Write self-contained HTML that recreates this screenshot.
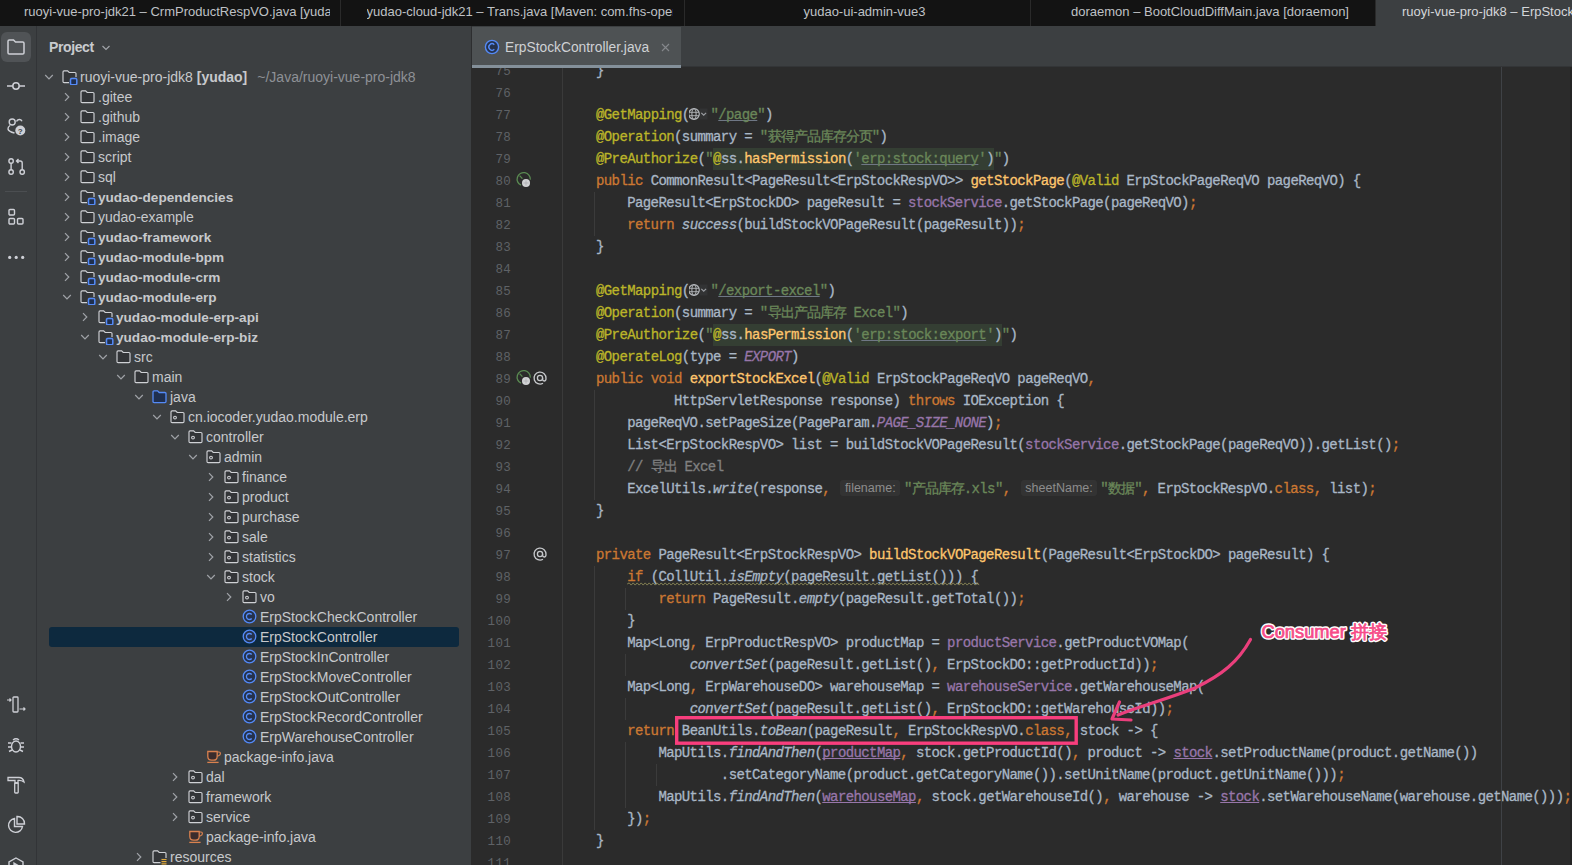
<!DOCTYPE html>
<html><head><meta charset="utf-8"><style>
*{margin:0;padding:0;box-sizing:border-box}
html,body{width:1572px;height:865px;overflow:hidden;background:#2b2b2b}
body{position:relative;font-family:"Liberation Sans",sans-serif}
#title{position:absolute;left:0;top:0;width:1572px;height:26px;background:#131313;overflow:hidden}
.tt{position:absolute;top:0;height:26px;border-right:1px solid #2a2a2a;color:#bfc1c5;font-size:13px;line-height:23px;text-align:center;white-space:nowrap;overflow:hidden}
.tt{padding-left:14px}.tt span{display:inline-block;max-width:306px;overflow:hidden;vertical-align:top}
.tt.act{background:#3c3f41;color:#d4d6da;text-align:left;padding-left:26px;border:none}
.tt.act span{max-width:none}
#act{position:absolute;left:0;top:26px;width:37px;height:839px;background:#3c3f41;border-right:1px solid #323437}
.actsel{position:absolute;left:1px;top:6px;width:30px;height:30px;border-radius:6px;background:#505356}
.ai{position:absolute}
.actsep{position:absolute;left:5px;top:165px;width:22px;height:1px;background:#4b4e51}
#panel{position:absolute;left:37px;top:26px;width:434px;height:839px;background:#3c3f41;overflow:hidden}
#tree{position:absolute;left:-37px;top:-26px;width:471px;height:865px}
.ph{position:absolute;left:12px;top:13px;font-size:14px;letter-spacing:-0.4px;font-weight:bold;color:#c9cbcf}
.ph svg{position:absolute;left:52px;top:4px}
.chw{position:absolute;width:10px;height:10px}
.chev{display:block}
.ic{position:absolute}
.tl{position:absolute;height:20px;line-height:20px;font-size:14px;color:#c7c9cc;white-space:nowrap}
.tl.b{font-weight:bold;font-size:13.6px;line-height:21.8px}
.tl b{font-weight:bold}
.gr{color:#8e9196;font-weight:normal;margin-left:10px}
.sel{position:absolute;left:49px;width:410px;height:20px;background:#0d293e;border-radius:3px}
#ehead{position:absolute;left:471px;top:26px;width:1101px;height:41px;background:#3c3f41;border-bottom:1px solid #333537;border-left:1px solid #2d2e30}
.etab{position:absolute;left:0px;top:1px;width:209px;height:41px;background:#4e5254}
.etab .ul{position:absolute;left:0;bottom:0;width:209px;height:3px;background:#84909a}
.etab .t{position:absolute;left:33px;top:13px;font-size:13.8px;color:#cfd1d4;white-space:nowrap}
.etab svg{position:absolute}
#editor{position:absolute;left:471px;top:67px;width:1101px;height:798px;background:#2b2b2b;overflow:hidden}
#code{position:absolute;left:-471px;top:-67px;width:1572px;height:865px}
.ln{position:absolute;left:480px;width:31px;height:22px;line-height:24px;text-align:right;font-family:"Liberation Mono",monospace;font-size:12.5px;letter-spacing:0.3px;color:#5f6266}
.cl{position:absolute;left:564.8px;height:22px;line-height:23px;font-family:"Liberation Mono",monospace;font-size:14px;letter-spacing:-0.6px;-webkit-text-stroke:0.3px currentColor;color:#a9b7c6;white-space:pre}
.gsep{position:absolute;left:562px;top:67px;width:1px;height:798px;background:#3a3a3a}
.guide{position:absolute;width:1px;background:#3b3b3b}
.rmargin{position:absolute;left:1500.5px;top:67px;width:1px;height:798px;background:#3f4246;z-index:2}
.redge{position:absolute;left:1570px;top:67px;width:2px;height:798px;background:#242424;z-index:2}
.k{color:#cc7832}.a{color:#bbb529}.s{color:#6a8759}.m{color:#ffc66d}.f{color:#9876aa}
.fi{color:#9876aa;font-style:italic}.i{font-style:italic}.c{color:#808080}
.su{color:#6a8759;text-decoration:underline;text-decoration-color:#6f7785;text-decoration-skip-ink:none}
.fu{color:#9876aa;text-decoration:underline;text-decoration-skip-ink:none}
.cjk,.cjkc{}
.cjk{color:#6a8759}.cjkc{color:#808080}
.cj{display:inline-block;width:13px;font-weight:normal;text-align:center}
.globe{display:inline-block;width:20.8px;vertical-align:top;position:relative}
.globe svg{position:absolute;left:-0.8px;top:2.2px}
.spel{background:#343e33;display:inline-block;height:22px;vertical-align:top}
.hint{display:inline-block;position:relative;vertical-align:top;height:22px}
.hint span{position:absolute;left:2.5px;right:3.5px;top:2.5px;height:16px;line-height:16px;background:#333333;border-radius:3px;color:#8d8d8d;font-family:"Liberation Sans",sans-serif;font-size:12.5px;padding-left:4.5px;letter-spacing:0;-webkit-text-stroke:0}
.wavy{}
.WAVY{text-decoration:underline wavy #8a8a5a}
#anno{position:absolute;left:0;top:0}
.atext{position:absolute;left:1261px;top:618px;font-size:18px;font-weight:bold;color:#ee4a86;white-space:nowrap;letter-spacing:-0.5px;
 text-shadow:1px 1px 0 #fff,-1px -1px 0 #fff,1px -1px 0 #fff,-1px 1px 0 #fff,0 1px 0 #fff,0 -1px 0 #fff,1px 0 0 #fff,-1px 0 0 #fff}
</style></head>
<body>
<div id="title"><div class="tt" style="left:0px;width:341px"><span>ruoyi-vue-pro-jdk21 – CrmProductRespVO.java [yudao]</span></div><div class="tt" style="left:341px;width:344px"><span>yudao-cloud-jdk21 – Trans.java [Maven: com.fhs-open</span></div><div class="tt" style="left:685px;width:346px"><span>yudao-ui-admin-vue3</span></div><div class="tt" style="left:1031px;width:345px"><span>doraemon – BootCloudDiffMain.java [doraemon]</span></div><div class="tt act" style="left:1376px;width:344px"><span>ruoyi-vue-pro-jdk8 – ErpStockController.java [yudao]</span></div></div>
<div id="act">
<div class="actsel"></div>
<svg class="ai" style="left:6px;top:11px" width="20" height="20" viewBox="0 0 20 20"><path d="M2 4.3 Q2 3 3.3 3 H7.5 L9.5 5 H16.7 Q18 5 18 6.3 V15.7 Q18 17 16.7 17 H3.3 Q2 17 2 15.7 Z" fill="none" stroke="#ced0d6" stroke-width="1.5"/></svg>
<svg class="ai" style="left:6px;top:50px" width="20" height="20" viewBox="0 0 20 20"><circle cx="10" cy="10" r="3.2" fill="none" stroke="#ced0d6" stroke-width="1.5"/><path d="M1 10 H6.8 M13.2 10 H19" stroke="#ced0d6" stroke-width="1.5"/></svg>
<svg class="ai" style="left:6px;top:90px" width="20" height="20" viewBox="0 0 20 20"><circle cx="6.2" cy="6" r="3" fill="none" stroke="#ced0d6" stroke-width="1.4"/><path d="M10.5 5.5 A3 3 0 0 1 16 5.2" fill="none" stroke="#ced0d6" stroke-width="1.4"/><path d="M4 9.5 Q1.8 11 2 13 Q2.5 15.5 8.5 17" fill="none" stroke="#ced0d6" stroke-width="1.4"/><circle cx="14.3" cy="14.5" r="5" fill="#ced0d6"/><text x="14.3" y="17.6" font-size="8" font-family="Liberation Sans" font-weight="bold" text-anchor="middle" fill="#3c3f41">?</text></svg>
<svg class="ai" style="left:6px;top:130px" width="20" height="20" viewBox="0 0 20 20"><circle cx="5.1" cy="5" r="2.2" fill="none" stroke="#ced0d6" stroke-width="1.4"/><circle cx="5.1" cy="16" r="2.2" fill="none" stroke="#ced0d6" stroke-width="1.4"/><circle cx="16.2" cy="16" r="2.2" fill="none" stroke="#ced0d6" stroke-width="1.4"/><path d="M5.1 7.2 V13.8 M16.2 13.8 V7 Q16.2 5 14.2 5 H10.5 M12.5 3 L10.5 5 L12.5 7" fill="none" stroke="#ced0d6" stroke-width="1.4"/></svg>
<div class="actsep"></div>
<svg class="ai" style="left:6px;top:181px" width="20" height="20" viewBox="0 0 20 20"><rect x="3" y="2.5" width="5.5" height="5.5" rx="1" fill="none" stroke="#ced0d6" stroke-width="1.4"/><rect x="3" y="11.5" width="5.5" height="5.5" rx="1" fill="none" stroke="#ced0d6" stroke-width="1.4"/><rect x="11.5" y="11.5" width="5.5" height="5.5" rx="1" fill="none" stroke="#ced0d6" stroke-width="1.4"/></svg>
<svg class="ai" style="left:6px;top:221px" width="20" height="20" viewBox="0 0 20 20"><circle cx="3.7" cy="10.4" r="1.6" fill="#ced0d6"/><circle cx="10.2" cy="10.4" r="1.6" fill="#ced0d6"/><circle cx="16.7" cy="10.4" r="1.6" fill="#ced0d6"/></svg>
<svg class="ai" style="left:6px;top:669px" width="20" height="20" viewBox="0 0 20 20"><rect x="7" y="2" width="5" height="15" rx="0.8" fill="none" stroke="#ced0d6" stroke-width="1.3"/><path d="M1 5 H5 M3.5 3.5 L5 5 L3.5 6.5 M13.5 14 H19 M17.5 12.5 L19 14 L17.5 15.5" fill="none" stroke="#ced0d6" stroke-width="1.2"/></svg>
<svg class="ai" style="left:6px;top:709px" width="20" height="20" viewBox="0 0 20 20"><ellipse cx="10" cy="11.5" rx="4.5" ry="5.5" fill="none" stroke="#ced0d6" stroke-width="1.4"/><path d="M7 5 Q10 2.5 13 5 M2 8 H5.5 M14.5 8 H18 M2 12 H5.5 M14.5 12 H18 M3 16.5 L6 15 M17 16.5 L14 15" fill="none" stroke="#ced0d6" stroke-width="1.4"/></svg>
<svg class="ai" style="left:6px;top:749px" width="20" height="20" viewBox="0 0 20 20"><path d="M2 2.5 H13 Q17 2.5 18 7 Q15 5 12 5.5 V8 H9 V5.5 H2 Z" fill="none" stroke="#ced0d6" stroke-width="1.3"/><rect x="8.7" y="8" width="3.5" height="10" rx="0.8" fill="none" stroke="#ced0d6" stroke-width="1.3"/></svg>
<svg class="ai" style="left:6px;top:789px" width="20" height="20" viewBox="0 0 20 20"><path d="M8.5 3.5 A7 7 0 1 0 16.5 11.5 H8.5 Z" fill="none" stroke="#ced0d6" stroke-width="1.4"/><path d="M11 1.5 A7 7 0 0 1 18.5 9 H11 Z" fill="none" stroke="#ced0d6" stroke-width="1.4"/></svg>
<svg class="ai" style="left:6px;top:830px" width="20" height="20" viewBox="0 0 20 20"><path d="M10 2 L17 6 V14 L10 18 L3 14 V6 Z" fill="none" stroke="#ced0d6" stroke-width="1.4"/><path d="M8 7 L13 10 L8 13 Z" fill="none" stroke="#ced0d6" stroke-width="1.3"/></svg>
</div>
<div id="panel"><div class="ph">Project<svg width="10" height="10" viewBox="0 0 10 10"><path d="M1.5 3 L5 6.5 L8.5 3" fill="none" stroke="#a0a3a8" stroke-width="1.2"/></svg></div><div id="tree"><div class="chw" style="left:44px;top:71.9px"><svg class="chev" width="10" height="10" viewBox="0 0 10 10"><path d="M1.2 3 L5 6.8 L8.8 3" fill="none" stroke="#a0a3a8" stroke-width="1.2"/></svg></div><svg class="ic" style="left:62px;top:69.4px" width="16" height="16" viewBox="0 0 16 16"><path d="M1 3 Q1 1.9 2.1 1.9 H5.6 L7.2 3.5 H12.9 Q14 3.5 14 4.6 V12.5 Q14 13.6 12.9 13.6 H2.1 Q1 13.6 1 12.5 Z" fill="#333538" stroke="#cfd1d5" stroke-width="1.15"/><rect x="8.5" y="9.5" width="6.3" height="6.3" rx="1.2" fill="none" stroke="#3c3f41" stroke-width="3"/><rect x="8.5" y="9.5" width="6.3" height="6.3" rx="1.2" fill="#1f2f4f" stroke="#548af7" stroke-width="1.5"/></svg><div class="tl" style="left:80px;top:66.9px">ruoyi-vue-pro-jdk8 <b>[yudao]</b><span class="gr">~/Java/ruoyi-vue-pro-jdk8</span></div><div class="chw" style="left:62px;top:91.9px"><svg class="chev" width="10" height="10" viewBox="0 0 10 10"><path d="M3 1.2 L6.8 5 L3 8.8" fill="none" stroke="#a0a3a8" stroke-width="1.2"/></svg></div><svg class="ic" style="left:80px;top:89.4px" width="16" height="16" viewBox="0 0 16 16"><path d="M1 3 Q1 1.9 2.1 1.9 H5.6 L7.2 3.5 H12.9 Q14 3.5 14 4.6 V12.5 Q14 13.6 12.9 13.6 H2.1 Q1 13.6 1 12.5 Z" fill="#333538" stroke="#cfd1d5" stroke-width="1.15"/></svg><div class="tl" style="left:98px;top:86.9px">.gitee</div><div class="chw" style="left:62px;top:111.9px"><svg class="chev" width="10" height="10" viewBox="0 0 10 10"><path d="M3 1.2 L6.8 5 L3 8.8" fill="none" stroke="#a0a3a8" stroke-width="1.2"/></svg></div><svg class="ic" style="left:80px;top:109.4px" width="16" height="16" viewBox="0 0 16 16"><path d="M1 3 Q1 1.9 2.1 1.9 H5.6 L7.2 3.5 H12.9 Q14 3.5 14 4.6 V12.5 Q14 13.6 12.9 13.6 H2.1 Q1 13.6 1 12.5 Z" fill="#333538" stroke="#cfd1d5" stroke-width="1.15"/></svg><div class="tl" style="left:98px;top:106.9px">.github</div><div class="chw" style="left:62px;top:131.9px"><svg class="chev" width="10" height="10" viewBox="0 0 10 10"><path d="M3 1.2 L6.8 5 L3 8.8" fill="none" stroke="#a0a3a8" stroke-width="1.2"/></svg></div><svg class="ic" style="left:80px;top:129.4px" width="16" height="16" viewBox="0 0 16 16"><path d="M1 3 Q1 1.9 2.1 1.9 H5.6 L7.2 3.5 H12.9 Q14 3.5 14 4.6 V12.5 Q14 13.6 12.9 13.6 H2.1 Q1 13.6 1 12.5 Z" fill="#333538" stroke="#cfd1d5" stroke-width="1.15"/></svg><div class="tl" style="left:98px;top:126.9px">.image</div><div class="chw" style="left:62px;top:151.9px"><svg class="chev" width="10" height="10" viewBox="0 0 10 10"><path d="M3 1.2 L6.8 5 L3 8.8" fill="none" stroke="#a0a3a8" stroke-width="1.2"/></svg></div><svg class="ic" style="left:80px;top:149.4px" width="16" height="16" viewBox="0 0 16 16"><path d="M1 3 Q1 1.9 2.1 1.9 H5.6 L7.2 3.5 H12.9 Q14 3.5 14 4.6 V12.5 Q14 13.6 12.9 13.6 H2.1 Q1 13.6 1 12.5 Z" fill="#333538" stroke="#cfd1d5" stroke-width="1.15"/></svg><div class="tl" style="left:98px;top:146.9px">script</div><div class="chw" style="left:62px;top:171.9px"><svg class="chev" width="10" height="10" viewBox="0 0 10 10"><path d="M3 1.2 L6.8 5 L3 8.8" fill="none" stroke="#a0a3a8" stroke-width="1.2"/></svg></div><svg class="ic" style="left:80px;top:169.4px" width="16" height="16" viewBox="0 0 16 16"><path d="M1 3 Q1 1.9 2.1 1.9 H5.6 L7.2 3.5 H12.9 Q14 3.5 14 4.6 V12.5 Q14 13.6 12.9 13.6 H2.1 Q1 13.6 1 12.5 Z" fill="#333538" stroke="#cfd1d5" stroke-width="1.15"/></svg><div class="tl" style="left:98px;top:166.9px">sql</div><div class="chw" style="left:62px;top:191.9px"><svg class="chev" width="10" height="10" viewBox="0 0 10 10"><path d="M3 1.2 L6.8 5 L3 8.8" fill="none" stroke="#a0a3a8" stroke-width="1.2"/></svg></div><svg class="ic" style="left:80px;top:189.4px" width="16" height="16" viewBox="0 0 16 16"><path d="M1 3 Q1 1.9 2.1 1.9 H5.6 L7.2 3.5 H12.9 Q14 3.5 14 4.6 V12.5 Q14 13.6 12.9 13.6 H2.1 Q1 13.6 1 12.5 Z" fill="#333538" stroke="#cfd1d5" stroke-width="1.15"/><rect x="8.5" y="9.5" width="6.3" height="6.3" rx="1.2" fill="none" stroke="#3c3f41" stroke-width="3"/><rect x="8.5" y="9.5" width="6.3" height="6.3" rx="1.2" fill="#1f2f4f" stroke="#548af7" stroke-width="1.5"/></svg><div class="tl b" style="left:98px;top:186.9px">yudao-dependencies</div><div class="chw" style="left:62px;top:211.9px"><svg class="chev" width="10" height="10" viewBox="0 0 10 10"><path d="M3 1.2 L6.8 5 L3 8.8" fill="none" stroke="#a0a3a8" stroke-width="1.2"/></svg></div><svg class="ic" style="left:80px;top:209.4px" width="16" height="16" viewBox="0 0 16 16"><path d="M1 3 Q1 1.9 2.1 1.9 H5.6 L7.2 3.5 H12.9 Q14 3.5 14 4.6 V12.5 Q14 13.6 12.9 13.6 H2.1 Q1 13.6 1 12.5 Z" fill="#333538" stroke="#cfd1d5" stroke-width="1.15"/></svg><div class="tl" style="left:98px;top:206.9px">yudao-example</div><div class="chw" style="left:62px;top:231.9px"><svg class="chev" width="10" height="10" viewBox="0 0 10 10"><path d="M3 1.2 L6.8 5 L3 8.8" fill="none" stroke="#a0a3a8" stroke-width="1.2"/></svg></div><svg class="ic" style="left:80px;top:229.4px" width="16" height="16" viewBox="0 0 16 16"><path d="M1 3 Q1 1.9 2.1 1.9 H5.6 L7.2 3.5 H12.9 Q14 3.5 14 4.6 V12.5 Q14 13.6 12.9 13.6 H2.1 Q1 13.6 1 12.5 Z" fill="#333538" stroke="#cfd1d5" stroke-width="1.15"/><rect x="8.5" y="9.5" width="6.3" height="6.3" rx="1.2" fill="none" stroke="#3c3f41" stroke-width="3"/><rect x="8.5" y="9.5" width="6.3" height="6.3" rx="1.2" fill="#1f2f4f" stroke="#548af7" stroke-width="1.5"/></svg><div class="tl b" style="left:98px;top:226.9px">yudao-framework</div><div class="chw" style="left:62px;top:251.9px"><svg class="chev" width="10" height="10" viewBox="0 0 10 10"><path d="M3 1.2 L6.8 5 L3 8.8" fill="none" stroke="#a0a3a8" stroke-width="1.2"/></svg></div><svg class="ic" style="left:80px;top:249.4px" width="16" height="16" viewBox="0 0 16 16"><path d="M1 3 Q1 1.9 2.1 1.9 H5.6 L7.2 3.5 H12.9 Q14 3.5 14 4.6 V12.5 Q14 13.6 12.9 13.6 H2.1 Q1 13.6 1 12.5 Z" fill="#333538" stroke="#cfd1d5" stroke-width="1.15"/><rect x="8.5" y="9.5" width="6.3" height="6.3" rx="1.2" fill="none" stroke="#3c3f41" stroke-width="3"/><rect x="8.5" y="9.5" width="6.3" height="6.3" rx="1.2" fill="#1f2f4f" stroke="#548af7" stroke-width="1.5"/></svg><div class="tl b" style="left:98px;top:246.9px">yudao-module-bpm</div><div class="chw" style="left:62px;top:271.9px"><svg class="chev" width="10" height="10" viewBox="0 0 10 10"><path d="M3 1.2 L6.8 5 L3 8.8" fill="none" stroke="#a0a3a8" stroke-width="1.2"/></svg></div><svg class="ic" style="left:80px;top:269.4px" width="16" height="16" viewBox="0 0 16 16"><path d="M1 3 Q1 1.9 2.1 1.9 H5.6 L7.2 3.5 H12.9 Q14 3.5 14 4.6 V12.5 Q14 13.6 12.9 13.6 H2.1 Q1 13.6 1 12.5 Z" fill="#333538" stroke="#cfd1d5" stroke-width="1.15"/><rect x="8.5" y="9.5" width="6.3" height="6.3" rx="1.2" fill="none" stroke="#3c3f41" stroke-width="3"/><rect x="8.5" y="9.5" width="6.3" height="6.3" rx="1.2" fill="#1f2f4f" stroke="#548af7" stroke-width="1.5"/></svg><div class="tl b" style="left:98px;top:266.9px">yudao-module-crm</div><div class="chw" style="left:62px;top:291.9px"><svg class="chev" width="10" height="10" viewBox="0 0 10 10"><path d="M1.2 3 L5 6.8 L8.8 3" fill="none" stroke="#a0a3a8" stroke-width="1.2"/></svg></div><svg class="ic" style="left:80px;top:289.4px" width="16" height="16" viewBox="0 0 16 16"><path d="M1 3 Q1 1.9 2.1 1.9 H5.6 L7.2 3.5 H12.9 Q14 3.5 14 4.6 V12.5 Q14 13.6 12.9 13.6 H2.1 Q1 13.6 1 12.5 Z" fill="#333538" stroke="#cfd1d5" stroke-width="1.15"/><rect x="8.5" y="9.5" width="6.3" height="6.3" rx="1.2" fill="none" stroke="#3c3f41" stroke-width="3"/><rect x="8.5" y="9.5" width="6.3" height="6.3" rx="1.2" fill="#1f2f4f" stroke="#548af7" stroke-width="1.5"/></svg><div class="tl b" style="left:98px;top:286.9px">yudao-module-erp</div><div class="chw" style="left:80px;top:311.9px"><svg class="chev" width="10" height="10" viewBox="0 0 10 10"><path d="M3 1.2 L6.8 5 L3 8.8" fill="none" stroke="#a0a3a8" stroke-width="1.2"/></svg></div><svg class="ic" style="left:98px;top:309.4px" width="16" height="16" viewBox="0 0 16 16"><path d="M1 3 Q1 1.9 2.1 1.9 H5.6 L7.2 3.5 H12.9 Q14 3.5 14 4.6 V12.5 Q14 13.6 12.9 13.6 H2.1 Q1 13.6 1 12.5 Z" fill="#333538" stroke="#cfd1d5" stroke-width="1.15"/><rect x="8.5" y="9.5" width="6.3" height="6.3" rx="1.2" fill="none" stroke="#3c3f41" stroke-width="3"/><rect x="8.5" y="9.5" width="6.3" height="6.3" rx="1.2" fill="#1f2f4f" stroke="#548af7" stroke-width="1.5"/></svg><div class="tl b" style="left:116px;top:306.9px">yudao-module-erp-api</div><div class="chw" style="left:80px;top:331.9px"><svg class="chev" width="10" height="10" viewBox="0 0 10 10"><path d="M1.2 3 L5 6.8 L8.8 3" fill="none" stroke="#a0a3a8" stroke-width="1.2"/></svg></div><svg class="ic" style="left:98px;top:329.4px" width="16" height="16" viewBox="0 0 16 16"><path d="M1 3 Q1 1.9 2.1 1.9 H5.6 L7.2 3.5 H12.9 Q14 3.5 14 4.6 V12.5 Q14 13.6 12.9 13.6 H2.1 Q1 13.6 1 12.5 Z" fill="#333538" stroke="#cfd1d5" stroke-width="1.15"/><rect x="8.5" y="9.5" width="6.3" height="6.3" rx="1.2" fill="none" stroke="#3c3f41" stroke-width="3"/><rect x="8.5" y="9.5" width="6.3" height="6.3" rx="1.2" fill="#1f2f4f" stroke="#548af7" stroke-width="1.5"/></svg><div class="tl b" style="left:116px;top:326.9px">yudao-module-erp-biz</div><div class="chw" style="left:98px;top:351.9px"><svg class="chev" width="10" height="10" viewBox="0 0 10 10"><path d="M1.2 3 L5 6.8 L8.8 3" fill="none" stroke="#a0a3a8" stroke-width="1.2"/></svg></div><svg class="ic" style="left:116px;top:349.4px" width="16" height="16" viewBox="0 0 16 16"><path d="M1 3 Q1 1.9 2.1 1.9 H5.6 L7.2 3.5 H12.9 Q14 3.5 14 4.6 V12.5 Q14 13.6 12.9 13.6 H2.1 Q1 13.6 1 12.5 Z" fill="#333538" stroke="#cfd1d5" stroke-width="1.15"/></svg><div class="tl" style="left:134px;top:346.9px">src</div><div class="chw" style="left:116px;top:371.9px"><svg class="chev" width="10" height="10" viewBox="0 0 10 10"><path d="M1.2 3 L5 6.8 L8.8 3" fill="none" stroke="#a0a3a8" stroke-width="1.2"/></svg></div><svg class="ic" style="left:134px;top:369.4px" width="16" height="16" viewBox="0 0 16 16"><path d="M1 3 Q1 1.9 2.1 1.9 H5.6 L7.2 3.5 H12.9 Q14 3.5 14 4.6 V12.5 Q14 13.6 12.9 13.6 H2.1 Q1 13.6 1 12.5 Z" fill="#333538" stroke="#cfd1d5" stroke-width="1.15"/></svg><div class="tl" style="left:152px;top:366.9px">main</div><div class="chw" style="left:134px;top:391.9px"><svg class="chev" width="10" height="10" viewBox="0 0 10 10"><path d="M1.2 3 L5 6.8 L8.8 3" fill="none" stroke="#a0a3a8" stroke-width="1.2"/></svg></div><svg class="ic" style="left:152px;top:389.4px" width="16" height="16" viewBox="0 0 16 16"><path d="M1 3 Q1 1.9 2.1 1.9 H5.6 L7.2 3.5 H12.9 Q14 3.5 14 4.6 V12.5 Q14 13.6 12.9 13.6 H2.1 Q1 13.6 1 12.5 Z" fill="#1f2f4f" stroke="#548af7" stroke-width="1.3"/></svg><div class="tl" style="left:170px;top:386.9px">java</div><div class="chw" style="left:152px;top:411.9px"><svg class="chev" width="10" height="10" viewBox="0 0 10 10"><path d="M1.2 3 L5 6.8 L8.8 3" fill="none" stroke="#a0a3a8" stroke-width="1.2"/></svg></div><svg class="ic" style="left:170px;top:409.4px" width="16" height="16" viewBox="0 0 16 16"><path d="M1 3 Q1 1.9 2.1 1.9 H5.6 L7.2 3.5 H12.9 Q14 3.5 14 4.6 V12.5 Q14 13.6 12.9 13.6 H2.1 Q1 13.6 1 12.5 Z" fill="#333538" stroke="#cfd1d5" stroke-width="1.15"/><circle cx="5" cy="8.6" r="1.4" fill="none" stroke="#cfd1d5" stroke-width="1.1"/></svg><div class="tl" style="left:188px;top:406.9px">cn.iocoder.yudao.module.erp</div><div class="chw" style="left:170px;top:431.9px"><svg class="chev" width="10" height="10" viewBox="0 0 10 10"><path d="M1.2 3 L5 6.8 L8.8 3" fill="none" stroke="#a0a3a8" stroke-width="1.2"/></svg></div><svg class="ic" style="left:188px;top:429.4px" width="16" height="16" viewBox="0 0 16 16"><path d="M1 3 Q1 1.9 2.1 1.9 H5.6 L7.2 3.5 H12.9 Q14 3.5 14 4.6 V12.5 Q14 13.6 12.9 13.6 H2.1 Q1 13.6 1 12.5 Z" fill="#333538" stroke="#cfd1d5" stroke-width="1.15"/><circle cx="5" cy="8.6" r="1.4" fill="none" stroke="#cfd1d5" stroke-width="1.1"/></svg><div class="tl" style="left:206px;top:426.9px">controller</div><div class="chw" style="left:188px;top:451.9px"><svg class="chev" width="10" height="10" viewBox="0 0 10 10"><path d="M1.2 3 L5 6.8 L8.8 3" fill="none" stroke="#a0a3a8" stroke-width="1.2"/></svg></div><svg class="ic" style="left:206px;top:449.4px" width="16" height="16" viewBox="0 0 16 16"><path d="M1 3 Q1 1.9 2.1 1.9 H5.6 L7.2 3.5 H12.9 Q14 3.5 14 4.6 V12.5 Q14 13.6 12.9 13.6 H2.1 Q1 13.6 1 12.5 Z" fill="#333538" stroke="#cfd1d5" stroke-width="1.15"/><circle cx="5" cy="8.6" r="1.4" fill="none" stroke="#cfd1d5" stroke-width="1.1"/></svg><div class="tl" style="left:224px;top:446.9px">admin</div><div class="chw" style="left:206px;top:471.9px"><svg class="chev" width="10" height="10" viewBox="0 0 10 10"><path d="M3 1.2 L6.8 5 L3 8.8" fill="none" stroke="#a0a3a8" stroke-width="1.2"/></svg></div><svg class="ic" style="left:224px;top:469.4px" width="16" height="16" viewBox="0 0 16 16"><path d="M1 3 Q1 1.9 2.1 1.9 H5.6 L7.2 3.5 H12.9 Q14 3.5 14 4.6 V12.5 Q14 13.6 12.9 13.6 H2.1 Q1 13.6 1 12.5 Z" fill="#333538" stroke="#cfd1d5" stroke-width="1.15"/><circle cx="5" cy="8.6" r="1.4" fill="none" stroke="#cfd1d5" stroke-width="1.1"/></svg><div class="tl" style="left:242px;top:466.9px">finance</div><div class="chw" style="left:206px;top:491.9px"><svg class="chev" width="10" height="10" viewBox="0 0 10 10"><path d="M3 1.2 L6.8 5 L3 8.8" fill="none" stroke="#a0a3a8" stroke-width="1.2"/></svg></div><svg class="ic" style="left:224px;top:489.4px" width="16" height="16" viewBox="0 0 16 16"><path d="M1 3 Q1 1.9 2.1 1.9 H5.6 L7.2 3.5 H12.9 Q14 3.5 14 4.6 V12.5 Q14 13.6 12.9 13.6 H2.1 Q1 13.6 1 12.5 Z" fill="#333538" stroke="#cfd1d5" stroke-width="1.15"/><circle cx="5" cy="8.6" r="1.4" fill="none" stroke="#cfd1d5" stroke-width="1.1"/></svg><div class="tl" style="left:242px;top:486.9px">product</div><div class="chw" style="left:206px;top:511.9px"><svg class="chev" width="10" height="10" viewBox="0 0 10 10"><path d="M3 1.2 L6.8 5 L3 8.8" fill="none" stroke="#a0a3a8" stroke-width="1.2"/></svg></div><svg class="ic" style="left:224px;top:509.4px" width="16" height="16" viewBox="0 0 16 16"><path d="M1 3 Q1 1.9 2.1 1.9 H5.6 L7.2 3.5 H12.9 Q14 3.5 14 4.6 V12.5 Q14 13.6 12.9 13.6 H2.1 Q1 13.6 1 12.5 Z" fill="#333538" stroke="#cfd1d5" stroke-width="1.15"/><circle cx="5" cy="8.6" r="1.4" fill="none" stroke="#cfd1d5" stroke-width="1.1"/></svg><div class="tl" style="left:242px;top:506.9px">purchase</div><div class="chw" style="left:206px;top:531.9px"><svg class="chev" width="10" height="10" viewBox="0 0 10 10"><path d="M3 1.2 L6.8 5 L3 8.8" fill="none" stroke="#a0a3a8" stroke-width="1.2"/></svg></div><svg class="ic" style="left:224px;top:529.4px" width="16" height="16" viewBox="0 0 16 16"><path d="M1 3 Q1 1.9 2.1 1.9 H5.6 L7.2 3.5 H12.9 Q14 3.5 14 4.6 V12.5 Q14 13.6 12.9 13.6 H2.1 Q1 13.6 1 12.5 Z" fill="#333538" stroke="#cfd1d5" stroke-width="1.15"/><circle cx="5" cy="8.6" r="1.4" fill="none" stroke="#cfd1d5" stroke-width="1.1"/></svg><div class="tl" style="left:242px;top:526.9px">sale</div><div class="chw" style="left:206px;top:551.9px"><svg class="chev" width="10" height="10" viewBox="0 0 10 10"><path d="M3 1.2 L6.8 5 L3 8.8" fill="none" stroke="#a0a3a8" stroke-width="1.2"/></svg></div><svg class="ic" style="left:224px;top:549.4px" width="16" height="16" viewBox="0 0 16 16"><path d="M1 3 Q1 1.9 2.1 1.9 H5.6 L7.2 3.5 H12.9 Q14 3.5 14 4.6 V12.5 Q14 13.6 12.9 13.6 H2.1 Q1 13.6 1 12.5 Z" fill="#333538" stroke="#cfd1d5" stroke-width="1.15"/><circle cx="5" cy="8.6" r="1.4" fill="none" stroke="#cfd1d5" stroke-width="1.1"/></svg><div class="tl" style="left:242px;top:546.9px">statistics</div><div class="chw" style="left:206px;top:571.9px"><svg class="chev" width="10" height="10" viewBox="0 0 10 10"><path d="M1.2 3 L5 6.8 L8.8 3" fill="none" stroke="#a0a3a8" stroke-width="1.2"/></svg></div><svg class="ic" style="left:224px;top:569.4px" width="16" height="16" viewBox="0 0 16 16"><path d="M1 3 Q1 1.9 2.1 1.9 H5.6 L7.2 3.5 H12.9 Q14 3.5 14 4.6 V12.5 Q14 13.6 12.9 13.6 H2.1 Q1 13.6 1 12.5 Z" fill="#333538" stroke="#cfd1d5" stroke-width="1.15"/><circle cx="5" cy="8.6" r="1.4" fill="none" stroke="#cfd1d5" stroke-width="1.1"/></svg><div class="tl" style="left:242px;top:566.9px">stock</div><div class="chw" style="left:224px;top:591.9px"><svg class="chev" width="10" height="10" viewBox="0 0 10 10"><path d="M3 1.2 L6.8 5 L3 8.8" fill="none" stroke="#a0a3a8" stroke-width="1.2"/></svg></div><svg class="ic" style="left:242px;top:589.4px" width="16" height="16" viewBox="0 0 16 16"><path d="M1 3 Q1 1.9 2.1 1.9 H5.6 L7.2 3.5 H12.9 Q14 3.5 14 4.6 V12.5 Q14 13.6 12.9 13.6 H2.1 Q1 13.6 1 12.5 Z" fill="#333538" stroke="#cfd1d5" stroke-width="1.15"/><circle cx="5" cy="8.6" r="1.4" fill="none" stroke="#cfd1d5" stroke-width="1.1"/></svg><div class="tl" style="left:260px;top:586.9px">vo</div><svg class="ic" style="left:242px;top:609.4px" width="16" height="16" viewBox="0 0 16 16"><circle cx="7.5" cy="7.5" r="6.3" fill="#25324d" stroke="#548af7" stroke-width="1.3"/><path d="M9.7 5.5 A3 3 0 1 0 9.7 9.5" fill="none" stroke="#548af7" stroke-width="1.3"/></svg><div class="tl" style="left:260px;top:606.9px">ErpStockCheckController</div><div class="sel" style="top:626.9px"></div><svg class="ic" style="left:242px;top:629.4px" width="16" height="16" viewBox="0 0 16 16"><circle cx="7.5" cy="7.5" r="6.3" fill="#25324d" stroke="#548af7" stroke-width="1.3"/><path d="M9.7 5.5 A3 3 0 1 0 9.7 9.5" fill="none" stroke="#548af7" stroke-width="1.3"/></svg><div class="tl" style="left:260px;top:626.9px">ErpStockController</div><svg class="ic" style="left:242px;top:649.4px" width="16" height="16" viewBox="0 0 16 16"><circle cx="7.5" cy="7.5" r="6.3" fill="#25324d" stroke="#548af7" stroke-width="1.3"/><path d="M9.7 5.5 A3 3 0 1 0 9.7 9.5" fill="none" stroke="#548af7" stroke-width="1.3"/></svg><div class="tl" style="left:260px;top:646.9px">ErpStockInController</div><svg class="ic" style="left:242px;top:669.4px" width="16" height="16" viewBox="0 0 16 16"><circle cx="7.5" cy="7.5" r="6.3" fill="#25324d" stroke="#548af7" stroke-width="1.3"/><path d="M9.7 5.5 A3 3 0 1 0 9.7 9.5" fill="none" stroke="#548af7" stroke-width="1.3"/></svg><div class="tl" style="left:260px;top:666.9px">ErpStockMoveController</div><svg class="ic" style="left:242px;top:689.4px" width="16" height="16" viewBox="0 0 16 16"><circle cx="7.5" cy="7.5" r="6.3" fill="#25324d" stroke="#548af7" stroke-width="1.3"/><path d="M9.7 5.5 A3 3 0 1 0 9.7 9.5" fill="none" stroke="#548af7" stroke-width="1.3"/></svg><div class="tl" style="left:260px;top:686.9px">ErpStockOutController</div><svg class="ic" style="left:242px;top:709.4px" width="16" height="16" viewBox="0 0 16 16"><circle cx="7.5" cy="7.5" r="6.3" fill="#25324d" stroke="#548af7" stroke-width="1.3"/><path d="M9.7 5.5 A3 3 0 1 0 9.7 9.5" fill="none" stroke="#548af7" stroke-width="1.3"/></svg><div class="tl" style="left:260px;top:706.9px">ErpStockRecordController</div><svg class="ic" style="left:242px;top:729.4px" width="16" height="16" viewBox="0 0 16 16"><circle cx="7.5" cy="7.5" r="6.3" fill="#25324d" stroke="#548af7" stroke-width="1.3"/><path d="M9.7 5.5 A3 3 0 1 0 9.7 9.5" fill="none" stroke="#548af7" stroke-width="1.3"/></svg><div class="tl" style="left:260px;top:726.9px">ErpWarehouseController</div><svg class="ic" style="left:206px;top:749.4px" width="16" height="16" viewBox="0 0 16 16"><g transform="translate(0,1)"><path d="M1.8 1.5 H11.2 V6.3 Q11.2 10.2 7.4 10.2 H5.6 Q1.8 10.2 1.8 6.3 Z" fill="#3b2c2c" stroke="#d9814f" stroke-width="1.3"/><path d="M11.2 2 H13 Q14.4 2 14.4 3.5 Q14.4 5.2 12.6 5.8 L11.2 6.3" fill="none" stroke="#d9814f" stroke-width="1.2"/><path d="M1.3 12.4 H12.6" stroke="#d9814f" stroke-width="1.3"/></g></svg><div class="tl" style="left:224px;top:746.9px">package-info.java</div><div class="chw" style="left:170px;top:771.9px"><svg class="chev" width="10" height="10" viewBox="0 0 10 10"><path d="M3 1.2 L6.8 5 L3 8.8" fill="none" stroke="#a0a3a8" stroke-width="1.2"/></svg></div><svg class="ic" style="left:188px;top:769.4px" width="16" height="16" viewBox="0 0 16 16"><path d="M1 3 Q1 1.9 2.1 1.9 H5.6 L7.2 3.5 H12.9 Q14 3.5 14 4.6 V12.5 Q14 13.6 12.9 13.6 H2.1 Q1 13.6 1 12.5 Z" fill="#333538" stroke="#cfd1d5" stroke-width="1.15"/><circle cx="5" cy="8.6" r="1.4" fill="none" stroke="#cfd1d5" stroke-width="1.1"/></svg><div class="tl" style="left:206px;top:766.9px">dal</div><div class="chw" style="left:170px;top:791.9px"><svg class="chev" width="10" height="10" viewBox="0 0 10 10"><path d="M3 1.2 L6.8 5 L3 8.8" fill="none" stroke="#a0a3a8" stroke-width="1.2"/></svg></div><svg class="ic" style="left:188px;top:789.4px" width="16" height="16" viewBox="0 0 16 16"><path d="M1 3 Q1 1.9 2.1 1.9 H5.6 L7.2 3.5 H12.9 Q14 3.5 14 4.6 V12.5 Q14 13.6 12.9 13.6 H2.1 Q1 13.6 1 12.5 Z" fill="#333538" stroke="#cfd1d5" stroke-width="1.15"/><circle cx="5" cy="8.6" r="1.4" fill="none" stroke="#cfd1d5" stroke-width="1.1"/></svg><div class="tl" style="left:206px;top:786.9px">framework</div><div class="chw" style="left:170px;top:811.9px"><svg class="chev" width="10" height="10" viewBox="0 0 10 10"><path d="M3 1.2 L6.8 5 L3 8.8" fill="none" stroke="#a0a3a8" stroke-width="1.2"/></svg></div><svg class="ic" style="left:188px;top:809.4px" width="16" height="16" viewBox="0 0 16 16"><path d="M1 3 Q1 1.9 2.1 1.9 H5.6 L7.2 3.5 H12.9 Q14 3.5 14 4.6 V12.5 Q14 13.6 12.9 13.6 H2.1 Q1 13.6 1 12.5 Z" fill="#333538" stroke="#cfd1d5" stroke-width="1.15"/><circle cx="5" cy="8.6" r="1.4" fill="none" stroke="#cfd1d5" stroke-width="1.1"/></svg><div class="tl" style="left:206px;top:806.9px">service</div><svg class="ic" style="left:188px;top:829.4px" width="16" height="16" viewBox="0 0 16 16"><g transform="translate(0,1)"><path d="M1.8 1.5 H11.2 V6.3 Q11.2 10.2 7.4 10.2 H5.6 Q1.8 10.2 1.8 6.3 Z" fill="#3b2c2c" stroke="#d9814f" stroke-width="1.3"/><path d="M11.2 2 H13 Q14.4 2 14.4 3.5 Q14.4 5.2 12.6 5.8 L11.2 6.3" fill="none" stroke="#d9814f" stroke-width="1.2"/><path d="M1.3 12.4 H12.6" stroke="#d9814f" stroke-width="1.3"/></g></svg><div class="tl" style="left:206px;top:826.9px">package-info.java</div><div class="chw" style="left:134px;top:851.9px"><svg class="chev" width="10" height="10" viewBox="0 0 10 10"><path d="M3 1.2 L6.8 5 L3 8.8" fill="none" stroke="#a0a3a8" stroke-width="1.2"/></svg></div><svg class="ic" style="left:152px;top:849.4px" width="16" height="16" viewBox="0 0 16 16"><path d="M1 3 Q1 1.9 2.1 1.9 H5.6 L7.2 3.5 H12.9 Q14 3.5 14 4.6 V12.5 Q14 13.6 12.9 13.6 H2.1 Q1 13.6 1 12.5 Z" fill="#333538" stroke="#cfd1d5" stroke-width="1.15"/><rect x="8.5" y="9" width="7" height="7" fill="#3c3f41"/><path d="M9.5 10.5 H14.5 M9.5 12.7 H14.5 M9.5 14.9 H14.5" stroke="#e0a93a" stroke-width="1.2"/></svg><div class="tl" style="left:170px;top:846.9px">resources</div></div></div>
<div id="editor"><div id="code">
<div class="gsep"></div><div class="rmargin"></div><div class="redge"></div>
<div class="guide" style="left:594px;top:191.6px;height:44px"></div><div class="guide" style="left:594px;top:389.6px;height:110px"></div><div class="guide" style="left:594px;top:565.6px;height:264px"></div><div class="guide" style="left:625px;top:587.6px;height:22px"></div><div class="guide" style="left:625px;top:653.6px;height:22px"></div><div class="guide" style="left:625px;top:697.6px;height:22px"></div><div class="guide" style="left:625px;top:741.6px;height:66px"></div><div class="guide" style="left:656px;top:763.6px;height:22px"></div>
<div class="ln" style="top:59.6px">75</div><div class="cl" style="top:59.6px">    }</div><div class="ln" style="top:81.6px">76</div><div class="cl" style="top:81.6px"></div><div class="ln" style="top:103.6px">77</div><div class="cl" style="top:103.6px">    <span class="a">@GetMapping</span>(<span class="globe"><svg width="21" height="16" viewBox="0 0 21 16"><rect x="11" y="2.5" width="7.5" height="11" fill="#323334"/><circle cx="5" cy="8" r="5.3" fill="none" stroke="#b3b6ba" stroke-width="1.2"/><ellipse cx="5" cy="8" rx="2.1" ry="5.3" fill="none" stroke="#b3b6ba" stroke-width="1"/><line x1="0" y1="6.3" x2="10" y2="6.3" stroke="#b3b6ba" stroke-width="0.9"/><line x1="0" y1="9.7" x2="10" y2="9.7" stroke="#b3b6ba" stroke-width="0.9"/><path d="M12.3 6.8 L14.7 9.2 L17.1 6.8" fill="none" stroke="#9a9da1" stroke-width="1.2"/></svg></span><span class="s">"</span><span class="su">/page</span><span class="s">"</span>)</div><div class="ln" style="top:125.6px">78</div><div class="cl" style="top:125.6px">    <span class="a">@Operation</span>(summary = <span class="s">"</span><span class="cjk"><b class="cj">获</b><b class="cj">得</b><b class="cj">产</b><b class="cj">品</b><b class="cj">库</b><b class="cj">存</b><b class="cj">分</b><b class="cj">页</b></span><span class="s">"</span>)</div><div class="ln" style="top:147.6px">79</div><div class="cl" style="top:147.6px">    <span class="a">@PreAuthorize</span>(<span class="s">"</span><span class="spel"><span class="a">@</span>ss.<span class="m">hasPermission</span>(<span class="s">'</span><span class="su">erp:stock:query</span><span class="s">'</span>)</span><span class="s">"</span>)</div><div class="ln" style="top:169.6px">80</div><div class="cl" style="top:169.6px">    <span class="k">public</span> CommonResult&lt;PageResult&lt;ErpStockRespVO&gt;&gt; <span class="m">getStockPage</span>(<span class="a">@Valid</span> ErpStockPageReqVO pageReqVO) {</div><div class="ln" style="top:191.6px">81</div><div class="cl" style="top:191.6px">        PageResult&lt;ErpStockDO&gt; pageResult = <span class="f">stockService</span>.getStockPage(pageReqVO)<span class="k">;</span></div><div class="ln" style="top:213.6px">82</div><div class="cl" style="top:213.6px">        <span class="k">return</span> <span class="i">success</span>(buildStockVOPageResult(pageResult))<span class="k">;</span></div><div class="ln" style="top:235.6px">83</div><div class="cl" style="top:235.6px">    }</div><div class="ln" style="top:257.6px">84</div><div class="cl" style="top:257.6px"></div><div class="ln" style="top:279.6px">85</div><div class="cl" style="top:279.6px">    <span class="a">@GetMapping</span>(<span class="globe"><svg width="21" height="16" viewBox="0 0 21 16"><rect x="11" y="2.5" width="7.5" height="11" fill="#323334"/><circle cx="5" cy="8" r="5.3" fill="none" stroke="#b3b6ba" stroke-width="1.2"/><ellipse cx="5" cy="8" rx="2.1" ry="5.3" fill="none" stroke="#b3b6ba" stroke-width="1"/><line x1="0" y1="6.3" x2="10" y2="6.3" stroke="#b3b6ba" stroke-width="0.9"/><line x1="0" y1="9.7" x2="10" y2="9.7" stroke="#b3b6ba" stroke-width="0.9"/><path d="M12.3 6.8 L14.7 9.2 L17.1 6.8" fill="none" stroke="#9a9da1" stroke-width="1.2"/></svg></span><span class="s">"</span><span class="su">/export-excel</span><span class="s">"</span>)</div><div class="ln" style="top:301.6px">86</div><div class="cl" style="top:301.6px">    <span class="a">@Operation</span>(summary = <span class="s">"</span><span class="cjk"><b class="cj">导</b><b class="cj">出</b><b class="cj">产</b><b class="cj">品</b><b class="cj">库</b><b class="cj">存</b></span><span class="s"> Excel"</span>)</div><div class="ln" style="top:323.6px">87</div><div class="cl" style="top:323.6px">    <span class="a">@PreAuthorize</span>(<span class="s">"</span><span class="spel"><span class="a">@</span>ss.<span class="m">hasPermission</span>(<span class="s">'</span><span class="su">erp:stock:export</span><span class="s">'</span>)</span><span class="s">"</span>)</div><div class="ln" style="top:345.6px">88</div><div class="cl" style="top:345.6px">    <span class="a">@OperateLog</span>(type = <span class="fi">EXPORT</span>)</div><div class="ln" style="top:367.6px">89</div><div class="cl" style="top:367.6px">    <span class="k">public</span> <span class="k">void</span> <span class="m">exportStockExcel</span>(<span class="a">@Valid</span> ErpStockPageReqVO pageReqVO<span class="k">,</span></div><div class="ln" style="top:389.6px">90</div><div class="cl" style="top:389.6px">              HttpServletResponse response) <span class="k">throws</span> IOException {</div><div class="ln" style="top:411.6px">91</div><div class="cl" style="top:411.6px">        pageReqVO.setPageSize(PageParam.<span class="fi">PAGE_SIZE_NONE</span>)<span class="k">;</span></div><div class="ln" style="top:433.6px">92</div><div class="cl" style="top:433.6px">        List&lt;ErpStockRespVO&gt; list = buildStockVOPageResult(<span class="f">stockService</span>.getStockPage(pageReqVO)).getList()<span class="k">;</span></div><div class="ln" style="top:455.6px">93</div><div class="cl" style="top:455.6px">        <span class="c">// </span><span class="cjkc"><b class="cj">导</b><b class="cj">出</b></span><span class="c"> Excel</span></div><div class="ln" style="top:477.6px">94</div><div class="cl" style="top:477.6px">        ExcelUtils.<span class="i">write</span>(response<span class="k">,</span> <span class="hint" style="width:66px"><span>filename:</span></span><span class="s">"</span><span class="cjk"><b class="cj">产</b><b class="cj">品</b><b class="cj">库</b><b class="cj">存</b></span><span class="s">.xls"</span><span class="k">,</span> <span class="hint" style="width:82px"><span>sheetName:</span></span><span class="s">"</span><span class="cjk"><b class="cj">数</b><b class="cj">据</b></span><span class="s">"</span><span class="k">,</span> ErpStockRespVO.<span class="k">class</span><span class="k">,</span> list)<span class="k">;</span></div><div class="ln" style="top:499.6px">95</div><div class="cl" style="top:499.6px">    }</div><div class="ln" style="top:521.6px">96</div><div class="cl" style="top:521.6px"></div><div class="ln" style="top:543.6px">97</div><div class="cl" style="top:543.6px">    <span class="k">private</span> PageResult&lt;ErpStockRespVO&gt; <span class="m">buildStockVOPageResult</span>(PageResult&lt;ErpStockDO&gt; pageResult) {</div><div class="ln" style="top:565.6px">98</div><div class="cl" style="top:565.6px">        <span class="k">if</span> (CollUtil.<span class="i">isEmpty</span>(pageResult.getList())) {</div><div class="ln" style="top:587.6px">99</div><div class="cl" style="top:587.6px">            <span class="k">return</span> PageResult.<span class="i">empty</span>(pageResult.getTotal())<span class="k">;</span></div><div class="ln" style="top:609.6px">100</div><div class="cl" style="top:609.6px">        }</div><div class="ln" style="top:631.6px">101</div><div class="cl" style="top:631.6px">        Map&lt;Long<span class="k">,</span> ErpProductRespVO&gt; productMap = <span class="f">productService</span>.getProductVOMap(</div><div class="ln" style="top:653.6px">102</div><div class="cl" style="top:653.6px">                <span class="i">convertSet</span>(pageResult.getList()<span class="k">,</span> ErpStockDO::getProductId))<span class="k">;</span></div><div class="ln" style="top:675.6px">103</div><div class="cl" style="top:675.6px">        Map&lt;Long<span class="k">,</span> ErpWarehouseDO&gt; warehouseMap = <span class="f">warehouseService</span>.getWarehouseMap(</div><div class="ln" style="top:697.6px">104</div><div class="cl" style="top:697.6px">                <span class="i">convertSet</span>(pageResult.getList()<span class="k">,</span> ErpStockDO::getWarehouseId))<span class="k">;</span></div><div class="ln" style="top:719.6px">105</div><div class="cl" style="top:719.6px">        <span class="k">return</span> BeanUtils.<span class="i">toBean</span>(pageResult<span class="k">,</span> ErpStockRespVO.<span class="k">class</span><span class="k">,</span> stock -&gt; {</div><div class="ln" style="top:741.6px">106</div><div class="cl" style="top:741.6px">            MapUtils.<span class="i">findAndThen</span>(<span class="fu">productMap</span><span class="k">,</span> stock.getProductId()<span class="k">,</span> product -&gt; <span class="fu">stock</span>.setProductName(product.getName())</div><div class="ln" style="top:763.6px">107</div><div class="cl" style="top:763.6px">                    .setCategoryName(product.getCategoryName()).setUnitName(product.getUnitName()))<span class="k">;</span></div><div class="ln" style="top:785.6px">108</div><div class="cl" style="top:785.6px">            MapUtils.<span class="i">findAndThen</span>(<span class="fu">warehouseMap</span><span class="k">,</span> stock.getWarehouseId()<span class="k">,</span> warehouse -&gt; <span class="fu">stock</span>.setWarehouseName(warehouse.getName()))<span class="k">;</span></div><div class="ln" style="top:807.6px">109</div><div class="cl" style="top:807.6px">        })<span class="k">;</span></div><div class="ln" style="top:829.6px">110</div><div class="cl" style="top:829.6px">    }</div><div class="ln" style="top:851.6px">111</div><div class="cl" style="top:851.6px"></div>
<svg style="position:absolute;left:0;top:0" width="1572" height="865"><path d="M627.2 584.0 L629.2 582.9 L631.2 585.1 L633.2 582.9 L635.2 585.1 L637.2 582.9 L639.2 585.1 L641.2 582.9 L643.2 585.1 L645.2 582.9 L647.2 585.1 L649.2 582.9 L651.2 585.1 L653.2 582.9 L655.2 585.1 L657.2 582.9 L659.2 585.1 L661.2 582.9 L663.2 585.1 L665.2 582.9 L667.2 585.1 L669.2 582.9 L671.2 585.1 L673.2 582.9 L675.2 585.1 L677.2 582.9 L679.2 585.1 L681.2 582.9 L683.2 585.1 L685.2 582.9 L687.2 585.1 L689.2 582.9 L691.2 585.1 L693.2 582.9 L695.2 585.1 L697.2 582.9 L699.2 585.1 L701.2 582.9 L703.2 585.1 L705.2 582.9 L707.2 585.1 L709.2 582.9 L711.2 585.1 L713.2 582.9 L715.2 585.1 L717.2 582.9 L719.2 585.1 L721.2 582.9 L723.2 585.1 L725.2 582.9 L727.2 585.1 L729.2 582.9 L731.2 585.1 L733.2 582.9 L735.2 585.1 L737.2 582.9 L739.2 585.1 L741.2 582.9 L743.2 585.1 L745.2 582.9 L747.2 585.1 L749.2 582.9 L751.2 585.1 L753.2 582.9 L755.2 585.1 L757.2 582.9 L759.2 585.1 L761.2 582.9 L763.2 585.1 L765.2 582.9 L767.2 585.1 L769.2 582.9 L771.2 585.1 L773.2 582.9 L775.2 585.1 L777.2 582.9 L779.2 585.1 L781.2 582.9 L783.2 585.1 L785.2 582.9 L787.2 585.1 L789.2 582.9 L791.2 585.1 L793.2 582.9 L795.2 585.1 L797.2 582.9 L799.2 585.1 L801.2 582.9 L803.2 585.1 L805.2 582.9 L807.2 585.1 L809.2 582.9 L811.2 585.1 L813.2 582.9 L815.2 585.1 L817.2 582.9 L819.2 585.1 L821.2 582.9 L823.2 585.1 L825.2 582.9 L827.2 585.1 L829.2 582.9 L831.2 585.1 L833.2 582.9 L835.2 585.1 L837.2 582.9 L839.2 585.1 L841.2 582.9 L843.2 585.1 L845.2 582.9 L847.2 585.1 L849.2 582.9 L851.2 585.1 L853.2 582.9 L855.2 585.1 L857.2 582.9 L859.2 585.1 L861.2 582.9 L863.2 585.1 L865.2 582.9 L867.2 585.1 L869.2 582.9 L871.2 585.1 L873.2 582.9 L875.2 585.1 L877.2 582.9 L879.2 585.1 L881.2 582.9 L883.2 585.1 L885.2 582.9 L887.2 585.1 L889.2 582.9 L891.2 585.1 L893.2 582.9 L895.2 585.1 L897.2 582.9 L899.2 585.1 L901.2 582.9 L903.2 585.1 L905.2 582.9 L907.2 585.1 L909.2 582.9 L911.2 585.1 L913.2 582.9 L915.2 585.1 L917.2 582.9 L919.2 585.1 L921.2 582.9 L923.2 585.1 L925.2 582.9 L927.2 585.1 L929.2 582.9 L931.2 585.1 L933.2 582.9 L935.2 585.1 L937.2 582.9 L939.2 585.1 L941.2 582.9 L943.2 585.1 L945.2 582.9 L947.2 585.1 L949.2 582.9 L951.2 585.1 L953.2 582.9 L955.2 585.1 L957.2 582.9 L959.2 585.1 L961.2 582.9 L963.2 585.1 L965.2 582.9 L967.2 585.1 L969.2 582.9 L971.2 585.1 L973.2 582.9 L975.2 585.1 L977.2 582.9 L979.2 585.1" fill="none" stroke="#8e8b58" stroke-width="0.9"/></svg>
<svg style="position:absolute;left:515px;top:171px" width="18" height="18" viewBox="0 0 18 18"><path d="M6 14.2 A6.6 6.6 0 1 1 15.3 8.6" fill="none" stroke="#5a8a52" stroke-width="1.3"/><path d="M4.6 4.6 L7.4 7.6" stroke="#5a8a52" stroke-width="1.3"/><circle cx="11" cy="12" r="4" fill="#d2d3d5"/><path d="M8.5 12 H13.5 M11 9.5 V14.5" stroke="#a9abae" stroke-width="0.7"/></svg>
<svg style="position:absolute;left:515px;top:369px" width="18" height="18" viewBox="0 0 18 18"><path d="M6 14.2 A6.6 6.6 0 1 1 15.3 8.6" fill="none" stroke="#5a8a52" stroke-width="1.3"/><path d="M4.6 4.6 L7.4 7.6" stroke="#5a8a52" stroke-width="1.3"/><circle cx="11" cy="12" r="4" fill="#d2d3d5"/><path d="M8.5 12 H13.5 M11 9.5 V14.5" stroke="#a9abae" stroke-width="0.7"/></svg>
<svg style="position:absolute;left:532px;top:370px" width="16" height="16" viewBox="0 0 16 16"><circle cx="8" cy="8" r="2.6" fill="none" stroke="#c7c9cc" stroke-width="1.3"/><path d="M10.6 8 V9.3 Q10.6 11 12.2 11 Q14 11 14 8.5 A6 6 0 1 0 11 13.3" fill="none" stroke="#c7c9cc" stroke-width="1.3"/></svg>
<svg style="position:absolute;left:532px;top:546px" width="16" height="16" viewBox="0 0 16 16"><circle cx="8" cy="8" r="2.6" fill="none" stroke="#c7c9cc" stroke-width="1.3"/><path d="M10.6 8 V9.3 Q10.6 11 12.2 11 Q14 11 14 8.5 A6 6 0 1 0 11 13.3" fill="none" stroke="#c7c9cc" stroke-width="1.3"/></svg>
</div></div>
<div id="ehead"><div class="etab"><svg style="left:12px;top:12px" width="16" height="16" viewBox="0 0 16 16"><circle cx="8" cy="8" r="6.6" fill="#25324d" stroke="#548af7" stroke-width="1.4"/><path d="M10.3 5.7 A3.2 3.2 0 1 0 10.3 10.3" fill="none" stroke="#548af7" stroke-width="1.4"/></svg><div class="t">ErpStockController.java</div>
<svg style="left:189px;top:16px" width="9" height="9" viewBox="0 0 9 9"><path d="M1 1 L8 8 M8 1 L1 8" stroke="#85888c" stroke-width="1.1"/></svg><div class="ul"></div></div></div>
<svg id="anno" width="1572" height="865" viewBox="0 0 1572 865">
<rect x="676.7" y="717.7" width="399.5" height="25.5" fill="none" stroke="#f83e7d" stroke-width="3.4"/>
<path d="M1250.5 639.5 C1238 662 1222 675 1195 688 C1165 700 1140 706 1118 715" fill="none" stroke="#ea3f7c" stroke-width="3.2" stroke-linecap="round"/>
<text x="1261.5" y="638" font-family="Liberation Sans" font-size="18.3" fill="#ffffff" stroke="#ffffff" stroke-width="3.6" stroke-linejoin="round">Consumer 拼接</text><text x="1261.5" y="638" font-family="Liberation Sans" font-size="18.3" fill="#f64b88" stroke="#f64b88" stroke-width="0.7" stroke-linejoin="round">Consumer 拼接</text>
<path d="M1119.5 702 L1112 719 L1131 720" fill="none" stroke="#ea3f7c" stroke-width="3.2" stroke-linecap="round" stroke-linejoin="round"/>
</svg>

</body></html>
